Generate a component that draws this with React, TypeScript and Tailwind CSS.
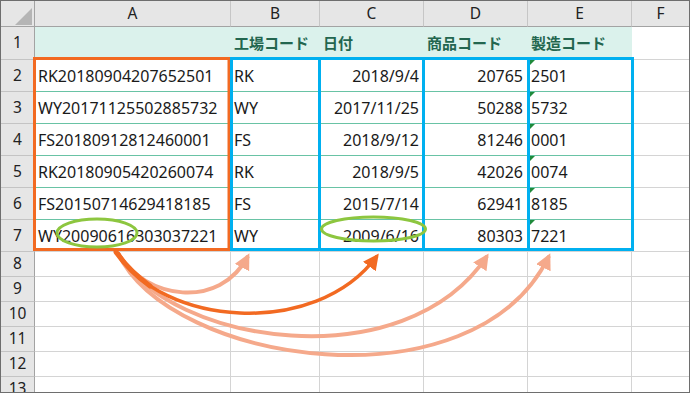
import React from "react";

const rows = [
  ["RK20180904207652501", "RK", "2018/9/4", "20765", "2501"],
  ["WY20171125502885732", "WY", "2017/11/25", "50288", "5732"],
  ["FS20180912812460001", "FS", "2018/9/12", "81246", "0001"],
  ["RK20180905420260074", "RK", "2018/9/5", "42026", "0074"],
  ["FS20150714629418185", "FS", "2015/7/14", "62941", "8185"],
  ["WY20090616303037221", "WY", "2009/6/16", "80303", "7221"],
];

const headers = ["", "工場コード", "日付", "商品コード", "製造コード"];
const letters = ["A", "B", "C", "D", "E", "F"];
const emptyRows = [8, 9, 10, 11, 12, 13];

const rowHead =
  "flex items-center justify-center bg-[#e6e6e6] border-r border-b border-r-[#a3a3a3] border-b-[#c4c4c4] text-[15.5px] text-[#222]";

export default function App() {
  return (
    <div className="h-[393px] w-[690px] overflow-hidden border border-[#6e6e6e] bg-white font-['Noto_Sans',sans-serif]">
      <div className="relative">
        <div className="grid grid-cols-[34px_196px_89px_104px_104px_104px_1fr] grid-rows-[26px_33px_repeat(6,32px)_repeat(6,25px)]">
          {/* corner */}
          <div className="relative bg-[#e6e6e6] border-r border-b border-r-[#a3a3a3] border-b-[#a3a3a3]">
            <div className="absolute right-[2px] bottom-[1px] h-0 w-0 border-b-[17px] border-l-[17px] border-b-[#b5b5b5] border-l-transparent" />
          </div>
          {letters.map((l, i) => (
            <div
              key={l}
              className={`flex items-center justify-center bg-[#e6e6e6] border-b border-b-[#a3a3a3] text-[15.5px] text-[#222] ${
                i < 5 ? "border-r border-r-[#c6c6c6]" : ""
              }`}
            >
              {l}
            </div>
          ))}

          {/* row 1 */}
          <div className={rowHead}>1</div>
          {headers.map((h, i) => (
            <div
              key={i}
              className="flex items-center bg-[#dbf2ec] pl-[3px] font-['Noto_Sans_CJK_JP',sans-serif] text-[15px] font-bold text-[#23664f]"
            >
              {h}
            </div>
          ))}
          <div className="border-b border-[#d4d4d4]" />

          {/* data rows */}
          {rows.map((r, ri) => {
            const last = ri === rows.length - 1;
            const line = last ? "border-b-[#d4d4d4]" : "border-b-[#69c3a5]";
            return (
              <React.Fragment key={ri}>
                <div className={rowHead}>{ri + 2}</div>
                <div className={`flex items-center border-r border-b border-r-[#d4d4d4] ${line} pl-[3px] text-[16px] text-[#1a1a1a]`}>
                  {r[0]}
                </div>
                <div className={`flex items-center border-r border-b border-r-[#d4d4d4] ${line} pl-[3px] text-[16px] text-[#1a1a1a]`}>
                  {r[1]}
                </div>
                <div className={`flex items-center justify-end border-r border-b border-r-[#d4d4d4] ${line} pr-[4px] text-[16px] text-[#1a1a1a]`}>
                  {r[2]}
                </div>
                <div className={`flex items-center justify-end border-r border-b border-r-[#d4d4d4] ${line} pr-[4px] text-[16px] text-[#1a1a1a]`}>
                  {r[3]}
                </div>
                <div className={`relative flex items-center border-r border-b border-r-[#d4d4d4] ${line} pl-[3px] text-[16px] text-[#1a1a1a]`}>
                  <span className="absolute left-[2px] top-0 h-0 w-0 border-t-[5px] border-r-[5px] border-t-[#1f8a3b] border-r-transparent" />
                  {r[4]}
                </div>
                <div className="border-b border-[#d4d4d4]" />
              </React.Fragment>
            );
          })}

          {/* empty rows */}
          {emptyRows.map((n) => (
            <React.Fragment key={n}>
              <div className={rowHead}>{n}</div>
              {[0, 1, 2, 3, 4].map((c) => (
                <div key={c} className="border-r border-b border-[#d4d4d4]" />
              ))}
              <div className="border-b border-[#d4d4d4]" />
            </React.Fragment>
          ))}
        </div>

        {/* annotations */}
        <svg
          className="pointer-events-none absolute -left-px -top-px"
          width={690}
          height={393}
          viewBox="0 0 690 393"
        >
          <defs>
            <marker id="headLight" markerUnits="userSpaceOnUse" markerWidth="18" markerHeight="18" refX="13" refY="8" orient="auto">
              <path d="M0,0 L16,8 L0,16 z" fill="#f5a98b" />
            </marker>
            <marker id="headDark" markerUnits="userSpaceOnUse" markerWidth="18" markerHeight="18" refX="13" refY="8" orient="auto">
              <path d="M0,0 L16,8 L0,16 z" fill="#f26a22" />
            </marker>
          </defs>

          <rect x="34.5" y="58.5" width="194.5" height="191" fill="none" stroke="#f26a22" strokeWidth="3" />
          <rect x="231.5" y="58.5" width="88" height="191" fill="none" stroke="#00b0f0" strokeWidth="3" />
          <rect x="319.5" y="58.5" width="104" height="191" fill="none" stroke="#00b0f0" strokeWidth="3" />
          <rect x="423.5" y="58.5" width="105" height="191" fill="none" stroke="#00b0f0" strokeWidth="3" />
          <rect x="528.5" y="58.5" width="104" height="191" fill="none" stroke="#00b0f0" strokeWidth="3" />

          <ellipse cx="97" cy="233" rx="40" ry="14" fill="none" stroke="#8dc63f" strokeWidth="3" />
          <ellipse cx="373.5" cy="229" rx="52" ry="12" fill="none" stroke="#8dc63f" strokeWidth="3" />

          <path d="M118,253 C170,365 475,410 549,256" fill="none" stroke="#f5a98b" strokeWidth="4" markerEnd="url(#headLight)" />
          <path d="M118,253 C170,345 405,380 487,256" fill="none" stroke="#f5a98b" strokeWidth="4" markerEnd="url(#headLight)" />
          <path d="M118,253 C145,300 220,310 248,256" fill="none" stroke="#f5a98b" strokeWidth="4" markerEnd="url(#headLight)" />
          <path d="M118,253 C160,325 315,340 377,256" fill="none" stroke="#f26a22" strokeWidth="3.5" markerEnd="url(#headDark)" />
          <path d="M116,252 C125,265 135,275 150,286" fill="none" stroke="#f26a22" strokeWidth="5" strokeLinecap="round" />
        </svg>
      </div>
    </div>
  );
}
